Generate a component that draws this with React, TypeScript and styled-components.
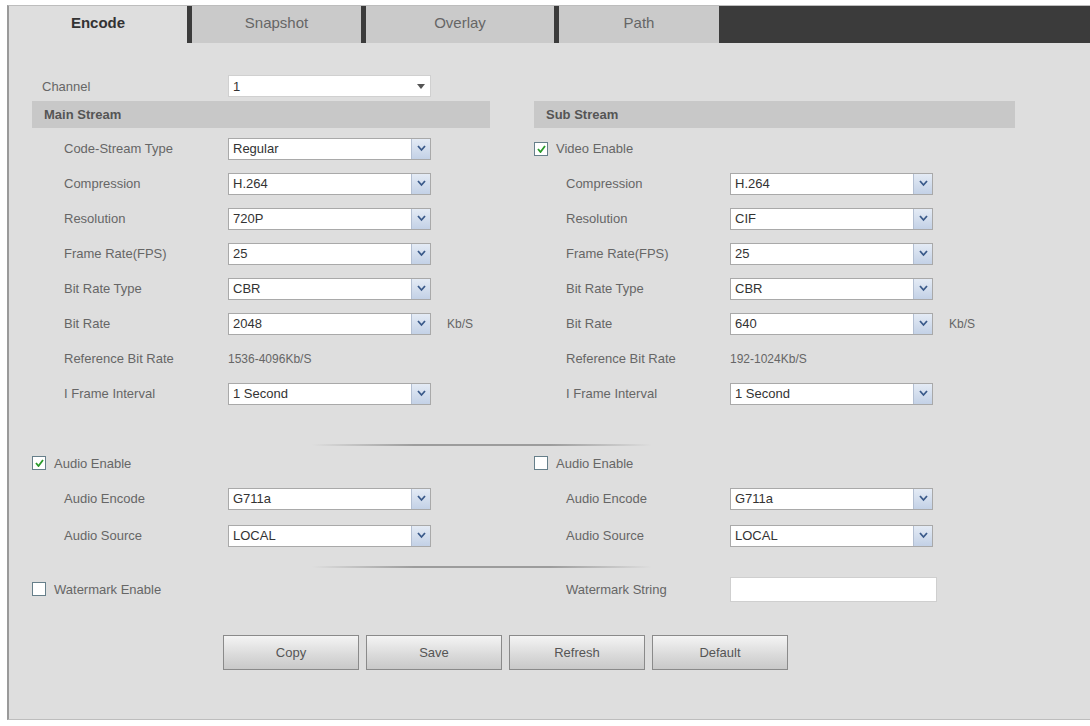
import React from "react";
import styled, { createGlobalStyle } from "styled-components";

const Global = createGlobalStyle`
  html, body { margin: 0; padding: 0; background: #fff; }
  body { font-family: "Liberation Sans", Arial, sans-serif; }
`;

const Panel = styled.div`
  margin: 5px 0 0 7px;
  height: 715px;
  border-left: 2px solid #9a9a9a;
  border-top: 1px solid #bdbdbd;
  border-bottom: 1px solid #bdbdbd;
  background: #dedede;
  box-sizing: border-box;
`;

const Tabs = styled.div`
  display: flex;
  height: 37px;
  background: #3b3b3b;
`;

const Tab = styled.div<{ $active?: boolean; $w: number }>`
  width: ${(p) => p.$w}px;
  display: flex;
  align-items: center;
  justify-content: center;
  font-size: 15px;
  background: ${(p) => (p.$active ? "#dedede" : "#cacaca")};
  color: ${(p) => (p.$active ? "#333" : "#666")};
  font-weight: ${(p) => (p.$active ? "bold" : "normal")};
  margin-right: 5px;
  box-sizing: border-box;
  height: 37px;
  padding-bottom: 4px;
`;

const Body = styled.div`
  padding: 28px 0 0 23px;
`;

const Row = styled.div<{ $h?: number }>`
  display: flex;
  align-items: center;
  height: ${(p) => p.$h ?? 35}px;
`;

const Columns = styled.div`
  display: grid;
  grid-template-columns: 502px 482px;
`;

const Header = styled.div<{ $w: number }>`
  width: ${(p) => p.$w}px;
  height: 27px;
  background: #c8c8c8;
  font-size: 13px;
  font-weight: bold;
  color: #555;
  display: flex;
  align-items: center;
  padding-left: 12px;
  box-sizing: border-box;
  margin-bottom: 3px;
`;

const Label = styled.div<{ $w?: number; $indent?: number }>`
  width: ${(p) => p.$w ?? 196}px;
  padding-left: ${(p) => p.$indent ?? 32}px;
  box-sizing: border-box;
  font-size: 13px;
  color: #666;
  flex-shrink: 0;
`;

const SelectBox = styled.div<{ $flat?: boolean }>`
  width: 203px;
  height: 22px;
  background: #fff;
  border: 1px solid ${(p) => (p.$flat ? "#d0d0d0" : "#a9a9a9")};
  box-sizing: border-box;
  display: flex;
  align-items: center;
  font-size: 13px;
  color: #333;
  padding-left: 4px;
  position: relative;
`;

const Arrow = styled.div<{ $flat?: boolean }>`
  position: absolute;
  right: 0;
  top: 0;
  bottom: 0;
  width: 18px;
  display: flex;
  align-items: center;
  justify-content: center;
  background: ${(p) => (p.$flat ? "#fff" : "linear-gradient(#e4ebf5, #c3d1e6)")};
  border-left: 1px solid ${(p) => (p.$flat ? "#fff" : "#b3bfd2")};
`;

const Unit = styled.span`
  margin-left: 16px;
  font-size: 12px;
  color: #666;
`;

const Value = styled.span`
  font-size: 12px;
  color: #666;
`;

const Check = styled.div`
  width: 12px;
  height: 12px;
  border: 1px solid #667f8a;
  background: #fff;
  margin-right: 8px;
  display: flex;
  align-items: center;
  justify-content: center;
`;

const CheckText = styled.span`
  font-size: 13px;
  color: #666;
`;

const Divider = styled.div`
  height: 2px;
  width: 340px;
  margin: 0 0 0 280px;
  background: linear-gradient(90deg, transparent, #9c9c9c 30%, #9c9c9c 70%, transparent);
`;

const TextInput = styled.div`
  width: 207px;
  height: 25px;
  background: #fff;
  border: 1px solid #cfcfcf;
  box-sizing: border-box;
`;

const Buttons = styled.div`
  display: flex;
  gap: 7px;
  padding-left: 191px;
  margin-top: 25px;
`;

const Btn = styled.div`
  width: 136px;
  height: 35px;
  box-sizing: border-box;
  border: 1px solid #8a8a8a;
  background: linear-gradient(#f4f4f4, #d9d9d9 60%, #c9c9c9);
  display: flex;
  align-items: center;
  justify-content: center;
  font-size: 13px;
  color: #555;
`;

const Caret = ({ flat }: { flat?: boolean }) =>
  flat ? (
    <svg width="8" height="5" viewBox="0 0 8 5">
      <path d="M0 0h8L4 5z" fill="#555" />
    </svg>
  ) : (
    <svg width="9" height="7" viewBox="0 0 9 7">
      <path d="M1 1l3.5 4L8 1" stroke="#3a5a8a" strokeWidth="1.8" fill="none" />
    </svg>
  );

const Select = ({ v, flat }: { v: string; flat?: boolean }) => (
  <SelectBox $flat={flat}>
    {v}
    <Arrow $flat={flat}>
      <Caret flat={flat} />
    </Arrow>
  </SelectBox>
);

const Tick = () => (
  <svg width="9" height="8" viewBox="0 0 9 8">
    <path d="M1 4l2.5 3L8 1" stroke="#2a9a2a" strokeWidth="1.8" fill="none" />
  </svg>
);

const CheckRow = ({ on, text, h }: { on?: boolean; text: string; h?: number }) => (
  <Row $h={h}>
    <Check>{on && <Tick />}</Check>
    <CheckText>{text}</CheckText>
  </Row>
);

type Item = [string, string, string?];

const main: Item[] = [
  ["Compression", "H.264"],
  ["Resolution", "720P"],
  ["Frame Rate(FPS)", "25"],
  ["Bit Rate Type", "CBR"],
  ["Bit Rate", "2048", "Kb/S"],
];
const sub: Item[] = [
  ["Compression", "H.264"],
  ["Resolution", "CIF"],
  ["Frame Rate(FPS)", "25"],
  ["Bit Rate Type", "CBR"],
  ["Bit Rate", "640", "Kb/S"],
];

const Stream = ({ items, refRate, first }: { items: Item[]; refRate: string; first: React.ReactNode }) => (
  <div>
    {first}
    {items.map(([l, v, u]) => (
      <Row key={l}>
        <Label>{l}</Label>
        <Select v={v} />
        {u && <Unit>{u}</Unit>}
      </Row>
    ))}
    <Row>
      <Label>Reference Bit Rate</Label>
      <Value>{refRate}</Value>
    </Row>
    <Row>
      <Label>I Frame Interval</Label>
      <Select v="1 Second" />
    </Row>
  </div>
);

const Audio = ({ on }: { on?: boolean }) => (
  <div>
    <CheckRow on={on} text="Audio Enable" h={34} />
    <Row $h={37}>
      <Label>Audio Encode</Label>
      <Select v="G711a" />
    </Row>
    <Row $h={37}>
      <Label>Audio Source</Label>
      <Select v="LOCAL" />
    </Row>
  </div>
);

export default function App() {
  return (
    <>
      <Global />
      <Panel>
        <Tabs>
          <Tab $active $w={178}>Encode</Tab>
          <Tab $w={169}>Snapshot</Tab>
          <Tab $w={188}>Overlay</Tab>
          <Tab $w={160}>Path</Tab>
        </Tabs>
        <Body>
          <Row $h={30}>
            <Label $indent={10}>Channel</Label>
            <Select v="1" flat />
          </Row>
          <Columns>
            <div>
              <Header $w={458}>Main Stream</Header>
              <Stream
                items={main}
                refRate="1536-4096Kb/S"
                first={
                  <Row>
                    <Label>Code-Stream Type</Label>
                    <Select v="Regular" />
                  </Row>
                }
              />
            </div>
            <div>
              <Header $w={481}>Sub Stream</Header>
              <Stream items={sub} refRate="192-1024Kb/S" first={<CheckRow on text="Video Enable" />} />
            </div>
          </Columns>
          <Row $h={33} />
          <Divider />
          <Columns>
            <Audio on />
            <Audio />
          </Columns>
          <Row $h={12} />
          <Divider />
          <Columns>
            <CheckRow text="Watermark Enable" h={42} />
            <Row $h={42}>
              <Label>Watermark String</Label>
              <TextInput />
            </Row>
          </Columns>
          <Buttons>
            <Btn>Copy</Btn>
            <Btn>Save</Btn>
            <Btn>Refresh</Btn>
            <Btn>Default</Btn>
          </Buttons>
        </Body>
      </Panel>
    </>
  );
}
